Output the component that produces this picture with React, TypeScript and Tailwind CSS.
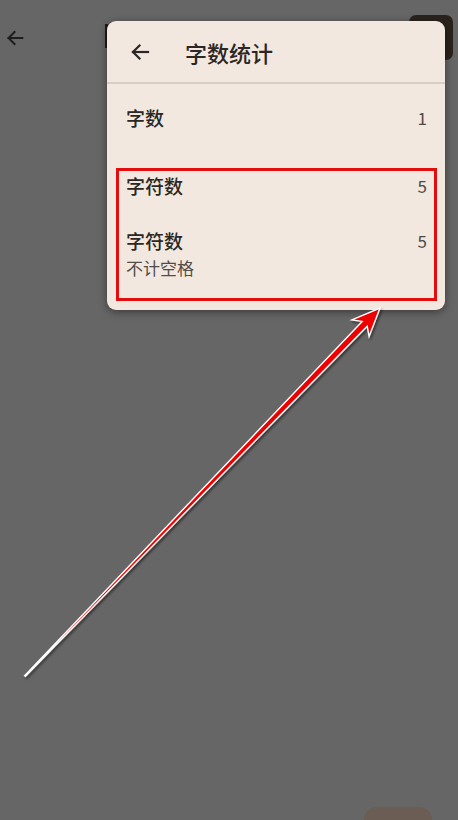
import React from 'react';

const font = { fontFamily: '"Noto Sans CJK SC", "Noto Sans", sans-serif' };

const BackArrow = ({ className }: { className?: string }) => (
  <svg viewBox="0 0 24 24" className={className} fill="none" stroke="currentColor" strokeWidth="2.2" strokeLinecap="square">
    <path d="M20 12H5" />
    <path d="M11.5 5.5L5 12l6.5 6.5" />
  </svg>
);

const StatRow = ({ label, value, sub }: { label: string; value: string; sub?: string }) => (
  <div className="flex items-start justify-between">
    <div className="flex flex-col">
      <span className="text-[19px] leading-6 font-medium text-[#2b2724]">{label}</span>
      {sub && <span className="text-[17px] leading-5 mt-[5px] text-[#524c47]">{sub}</span>}
    </div>
    <span className="text-[17px] leading-6 text-[#4f4a46]">{value}</span>
  </div>
);

// red annotation arrow (tail bottom-left, tip at the card)
const Annotation = () => (
  <svg className="absolute inset-0 pointer-events-none" width="458" height="820" viewBox="0 0 458 820">
    <defs>
      <filter id="sh" x="-10%" y="-10%" width="120%" height="120%">
        <feDropShadow dx="1.5" dy="2" stdDeviation="1.2" floodColor="#000" floodOpacity="0.45" />
      </filter>
    </defs>
    <polygon
      points="24.6,675.7 362.2,321.4 351.9,319.9 380,308 369.1,336.5 367.2,326.2 25.4,676.3"
      fill="#ee0000"
      stroke="#ffffff"
      strokeWidth="1.4"
      strokeLinejoin="miter"
      filter="url(#sh)"
    />
  </svg>
);

export default function App() {
  return (
    <div className="relative w-[458px] h-[820px] overflow-hidden bg-[#666666] flex flex-col justify-between" style={font}>
      {/* app bar underneath the popup */}
      <div className="flex items-start pt-[15px]">
        <BackArrow className="w-[22px] h-[22px] mt-[12px] ml-[4px] text-[#1e1e1e]" />
        <div className="w-[3px] h-[24px] mt-[9px] ml-[79px] bg-[#1f1b18]" />
        <div className="ml-auto mr-[5px] w-[44px] h-[45px] rounded-[7px] bg-[#2a231d]" />
      </div>

      {/* bottom button peeking */}
      <div className="flex justify-end pr-[26px]">
        <div className="w-[68px] h-[13px] rounded-t-[16px] bg-[#6c5d54]" />
      </div>

      {/* popup card */}
      <div className="absolute left-[107px] top-[21px] w-[338px] h-[289px] rounded-[9px] bg-[#f2e8e0] shadow-[0_2px_8px_rgba(0,0,0,0.45)] flex flex-col">
        <div className="h-[61px] flex items-center pl-[21px]">
          <BackArrow className="w-[24px] h-[24px] text-[#2b2724]" />
          <span className="ml-[33px] text-[22px] leading-7 font-medium text-[#2b2724]">字数统计</span>
        </div>
        <div className="h-[2px] bg-[#d8cec6]" />
        <div className="h-[84px] pt-[22px] pl-[19px] pr-[18px]">
          <StatRow label="字数" value="1" />
        </div>
        <div className="ml-[9px] mr-[8px] h-[133px] border-[3px] border-[#e30d0d] pt-[3px] pl-[7px] pr-[7px] flex flex-col">
          <StatRow label="字符数" value="5" />
          <div className="mt-[31px]">
            <StatRow label="字符数" value="5" sub="不计空格" />
          </div>
        </div>
      </div>

      <Annotation />
    </div>
  );
}
